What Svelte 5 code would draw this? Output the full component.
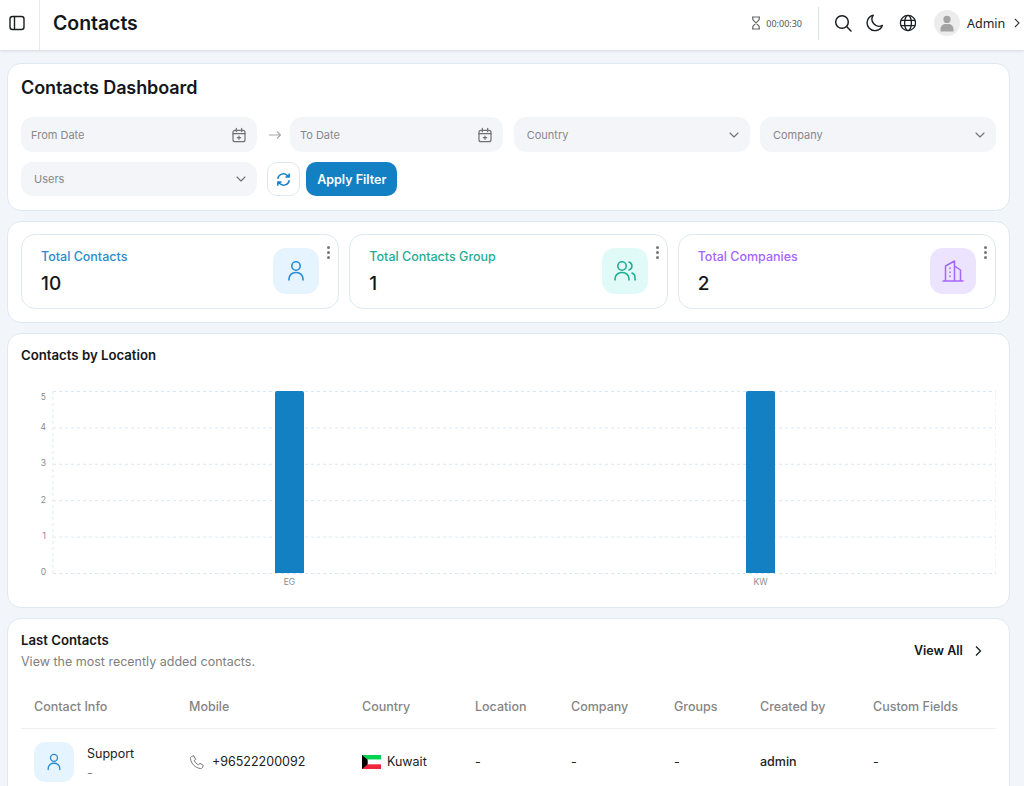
<script>
  const ticks = [5, 4, 3, 2, 1, 0];
  const bars = [
    { label: 'EG', x: 254 },
    { label: 'KW', x: 725 }
  ];
  const stats = [
    { title: 'Total Contacts', value: '10', tone: 'blue', icon: 'user' },
    { title: 'Total Contacts Group', value: '1', tone: 'teal', icon: 'users' },
    { title: 'Total Companies', value: '2', tone: 'purple', icon: 'building' }
  ];
  const columns = ['Contact Info', 'Mobile', 'Country', 'Location', 'Company', 'Groups', 'Created by', 'Custom Fields'];
</script>

{#snippet calendar()}
  <svg class="field-icon" width="16" height="16" viewBox="0 0 24 24" fill="none" stroke="currentColor" stroke-width="1.8" stroke-linecap="round" stroke-linejoin="round">
    <rect x="3" y="5" width="18" height="17" rx="3" />
    <path d="M8 2v5M16 2v5M3 10h18M12 13.5v5M9.5 16h5" />
  </svg>
{/snippet}

{#snippet chevron()}
  <svg class="field-icon" width="12" height="12" viewBox="0 0 24 24" fill="none" stroke="currentColor" stroke-width="2.2" stroke-linecap="round" stroke-linejoin="round">
    <path d="M4 8l8 8 8-8" />
  </svg>
{/snippet}

{#snippet userIcon(size)}
  <svg width={size} height={size} viewBox="0 0 24 24" fill="none" stroke="currentColor" stroke-width="1.6" stroke-linecap="round">
    <circle cx="12" cy="7" r="4.2" />
    <path d="M5 21v-1a6.500 6.500 0 0 1 6.500-6.500h1a6.500 6.500 0 0 1 6.500 6.500v1" />
  </svg>
{/snippet}

<div class="page">
  <header class="topbar">
    <div class="toggle">
      <svg width="18" height="18" viewBox="0 0 18 18" fill="none" stroke="#1a1d21" stroke-width="1.4">
        <rect x="2" y="2.500" width="14" height="13" rx="2.500" />
        <path d="M6.500 2.500v13" />
      </svg>
    </div>
    <h1>Contacts</h1>
    <div class="timer">
      <svg width="12" height="14" viewBox="0 0 12 14" fill="none" stroke="#666" stroke-width="1.2" stroke-linejoin="round">
        <path d="M2 1h8M2 13h8M2.800 1v2.600L9.200 10.400V13M9.200 1v2.600L2.800 10.400V13" />
      </svg>
      <span>00:00:30</span>
    </div>
    <div class="tools">
      <svg width="18" height="18" viewBox="0 0 18 18" fill="none" stroke="#1a1d21" stroke-width="1.500" stroke-linecap="round">
        <circle cx="8" cy="8" r="6.300" />
        <path d="M12.800 12.800L17 17" />
      </svg>
      <svg width="18" height="18" viewBox="0 0 18 18" fill="none" stroke="#1a1d21" stroke-width="1.400" stroke-linejoin="round">
        <path d="M7.300 1.200a7.800 7.800 0 1 0 9 10.200 7 7 0 0 1-9-10.200z" />
      </svg>
      <svg width="18" height="18" viewBox="0 0 18 18" fill="none" stroke="#1a1d21" stroke-width="1.300">
        <circle cx="10" cy="9" r="7.600" />
        <ellipse cx="10" cy="9" rx="3.400" ry="7.600" />
        <path d="M3 6.400h14M3 11.600h14" />
      </svg>
    </div>
    <div class="account">
      <div class="avatar">
        <svg width="16" height="17" viewBox="0 0 16 17" fill="#a3a3a3">
          <circle cx="8" cy="4.400" r="3.600" />
          <path d="M1.500 16.500v-2.500a5 5 0 0 1 5-5h3a5 5 0 0 1 5 5v2.500z" />
        </svg>
      </div>
      <span>Admin</span>
      <svg width="8" height="10" viewBox="0 0 8 10" fill="none" stroke="#333" stroke-width="1.100"><path d="M2 1l4 4-4 4" /></svg>
    </div>
  </header>

  <main>
    <section class="card filters">
      <h2>Contacts Dashboard</h2>
      <div class="filter-grid">
        <div class="date-range">
          <div class="field from">From Date {@render calendar()}</div>
          <svg class="arrow" width="14" height="10" viewBox="0 0 14 10" fill="none" stroke="#a8a8a8" stroke-width="1.100"><path d="M1 5h11.500M9 1.500L12.500 5 9 8.500" /></svg>
          <div class="field to">To Date {@render calendar()}</div>
        </div>
        <div class="field select">Country {@render chevron()}</div>
        <div class="field select">Company {@render chevron()}</div>
        <div class="field select users">Users {@render chevron()}</div>
        <div class="actions">
          <button class="refresh" aria-label="Refresh">
            <svg width="15" height="15" viewBox="0 0 24 24" fill="none" stroke="#1380c4" stroke-width="2.400" stroke-linecap="round" stroke-linejoin="round">
              <path d="M3 10a9 9 0 0 1 15-4.500L21 8M21 3v5h-5M21 14a9 9 0 0 1-15 4.500L3 16M3 21v-5h5" />
            </svg>
          </button>
          <button class="apply">Apply Filter</button>
        </div>
      </div>
    </section>

    <section class="card stats">
      {#each stats as stat}
        <div class="stat {stat.tone}">
          <div class="stat-text">
            <div class="stat-title">{stat.title}</div>
            <div class="stat-value">{stat.value}</div>
          </div>
          <div class="stat-icon">
            {#if stat.icon === 'user'}
              {@render userIcon(24)}
            {:else if stat.icon === 'users'}
              <svg width="24" height="24" viewBox="0 0 24 24" fill="none" stroke="currentColor" stroke-width="1.600" stroke-linecap="round">
                <circle cx="9" cy="7" r="4.200" />
                <path d="M2 21v-1a6.500 6.500 0 0 1 6.500-6.500h1a6.500 6.500 0 0 1 6.500 6.500v1M16 3a4.200 4.200 0 0 1 0 8M19 14a5 5 0 0 1 3 5v2" />
              </svg>
            {:else}
              <svg width="24" height="24" viewBox="0 0 24 24" fill="none" stroke="currentColor" stroke-width="1.500" stroke-linecap="round" stroke-linejoin="round">
                <path d="M2 22h20M4.500 22V7l9-5v20M13.500 7l6 4v11M9 9v.5M9 13v.5M9 17v.5" />
              </svg>
            {/if}
          </div>
          <div class="dots"><i></i><i></i><i></i></div>
        </div>
      {/each}
    </section>

    <section class="card chart-card">
      <h3>Contacts by Location</h3>
      <svg class="chart" width="975" height="218" viewBox="0 0 975 218">
        {#each ticks as tick, i}
          <line class="grid" x1="32" x2="975" y1={13.5 + i * 36.4} y2={13.5 + i * 36.4} />
          <text class="axis" x="25" y={i === 0 ? 22 : 15.3 + i * 36.4} text-anchor="end">{tick}</text>
        {/each}
        <line class="grid" x1="32" x2="32" y1="13" y2="195" />
        <line class="grid" x1="975" x2="975" y1="13" y2="195" />
        {#each bars as bar}
          <path d={`M${bar.x} 195V15a2 2 0 0 1 2-2h25a2 2 0 0 1 2 2v180z`} fill="#1380c4" />
          <text class="axis" x={bar.x + 14.5} y="207" text-anchor="middle">{bar.label}</text>
        {/each}
      </svg>
    </section>

    <section class="card last">
      <div class="last-head">
        <div>
          <h3>Last Contacts</h3>
          <p>View the most recently added contacts.</p>
        </div>
        <div class="view-all">
          View All
          <svg width="10" height="12" viewBox="0 0 10 12" fill="none" stroke="#1a1d21" stroke-width="1.300"><path d="M3 1.500L7.500 6 3 10.500" /></svg>
        </div>
      </div>
      <table>
        <colgroup>
          <col style="width:155px" /><col style="width:173px" /><col style="width:113px" /><col style="width:96px" />
          <col style="width:103px" /><col style="width:86px" /><col style="width:113px" /><col style="width:136px" />
        </colgroup>
        <thead>
          <tr>
            {#each columns as column}
              <th>{column}</th>
            {/each}
          </tr>
        </thead>
        <tbody>
          <tr>
            <td>
              <div class="contact">
                <div class="contact-icon">{@render userIcon(20)}</div>
                <div class="contact-text">
                  <div class="contact-name">Support</div>
                  <div class="contact-sub">-</div>
                </div>
              </div>
            </td>
            <td>
              <div class="inline">
                <svg width="16" height="16" viewBox="0 0 24 24" fill="none" stroke="#777" stroke-width="1.500" stroke-linejoin="round">
                  <path d="M7 2.500L3.500 4C2.500 4.500 2 5.500 2.200 7c1 7.500 7.300 13.800 14.800 14.800 1.500.2 2.500-.3 3-1.300l1.500-3.500-5-3-2.300 2.200c-2.800-1.200-5.200-3.700-6.400-6.400L10 8z" />
                </svg>
                +96522200092
              </div>
            </td>
            <td>
              <div class="inline flag-cell">
                <svg width="19" height="14" viewBox="0 0 20 15" preserveAspectRatio="none">
                  <rect width="20" height="5" fill="#00d34f" />
                  <rect y="5" width="20" height="5" fill="#fff" />
                  <rect y="10" width="20" height="5" fill="#f0263c" />
                  <path d="M0 0l6 5v5l-6 5z" fill="#000" />
                </svg>
                Kuwait
              </div>
            </td>
            <td>-</td>
            <td>-</td>
            <td>-</td>
            <td class="strong">admin</td>
            <td>-</td>
          </tr>
        </tbody>
      </table>
    </section>
  </main>
</div>

<style>
  :global(body) {
    margin: 0;
    background: #f2f5f9;
  }

  .page {
    height: 786px;
    overflow: hidden;
    font-family: Inter, 'Noto Sans', sans-serif;
    color: #14171a;
  }

  .topbar {
    height: 50px;
    box-sizing: border-box;
    padding-bottom: 4px;
    display: flex;
    align-items: center;
    background: #fff;
    box-shadow: 0 1px 3px rgba(0, 0, 0, 0.12);
    position: relative;
  }

  .toggle {
    width: 40px;
    height: 50px;
    align-self: flex-start;
    box-sizing: border-box;
    display: flex;
    align-items: center;
    padding: 0 0 4px 8px;
    border-right: 1px solid #e4edf4;
  }

  h1 {
    margin: 0 0 0 13px;
    font-size: 19.5px;
    font-weight: 600;
    letter-spacing: -0.05px;
    flex: 1;
  }

  .timer {
    display: flex;
    align-items: center;
    gap: 4px;
    font-size: 9px;
    color: #555;
    font-family: 'Noto Sans', sans-serif;
    padding-right: 16px;
    height: 33px;
    border-right: 1px solid #d5e4ee;
  }

  .tools {
    display: flex;
    align-items: center;
    gap: 14px;
    margin-left: 15px;
  }

  .account {
    display: flex;
    align-items: center;
    margin-left: 18px;
    width: 90px;
    font-family: 'Noto Sans', sans-serif;
    font-size: 12.5px;
    color: #222;
  }

  .account span {
    margin: 0 8px 0 7px;
  }

  .avatar {
    width: 26px;
    height: 26px;
    border-radius: 50%;
    background: #ececec;
    display: flex;
    align-items: flex-end;
    justify-content: center;
    box-sizing: border-box;
    padding-bottom: 4px;
  }

  main {
    padding: 13px 14px 0 7px;
    display: flex;
    flex-direction: column;
    gap: 10px;
  }

  .card {
    background: #fff;
    border: 1px solid #dfe9f1;
    border-radius: 14px;
    box-sizing: border-box;
  }

  .filters {
    height: 148px;
    padding: 12px 13px;
  }

  h2 {
    margin: 0;
    font-size: 18px;
    line-height: 24px;
    font-weight: 600;
    letter-spacing: -0.1px;
  }

  .filter-grid {
    margin-top: 17px;
    display: grid;
    grid-template-columns: repeat(4, 236px);
    gap: 10px;
    justify-content: space-between;
    color: #888;
    font-size: 11px;
  }

  .date-range {
    grid-column: span 2;
    display: flex;
    align-items: center;
  }

  .arrow {
    margin: 0 8px 0 11px;
    flex: none;
  }

  .field {
    height: 35px;
    flex: none;
    box-sizing: border-box;
    background: #f3f5f9;
    border-radius: 12px;
    padding: 0 10px;
    display: flex;
    align-items: center;
    justify-content: space-between;
  }

  .from {
    width: 236px;
  }

  .to {
    flex: 1;
  }

  .select {
    padding: 0 10px 0 13px;
  }

  .users {
    height: 34px;
  }

  .field-icon {
    color: #707070;
  }

  .actions {
    display: flex;
    gap: 6px;
  }

  button {
    font-family: inherit;
    cursor: pointer;
  }

  .refresh {
    width: 33px;
    height: 34px;
    padding: 0;
    display: flex;
    align-items: center;
    justify-content: center;
    background: #fff;
    border: 1px solid #dfe9f1;
    border-radius: 10px;
  }

  .apply {
    width: 91px;
    height: 34px;
    padding: 0;
    background: #1380c4;
    border: none;
    border-radius: 10px;
    color: #fff;
    font-size: 12.5px;
    font-weight: 600;
  }

  .stats {
    height: 102px;
    padding: 12px 13px;
    display: grid;
    grid-template-columns: repeat(3, 1fr);
    gap: 10px;
  }

  .stat {
    position: relative;
    height: 75px;
    box-sizing: border-box;
    border: 1px solid #dfe9f1;
    border-radius: 14px;
    padding: 13px 19px;
    display: flex;
    justify-content: space-between;
  }

  .stat-title {
    font-size: 12.5px;
    line-height: 17px;
    font-weight: 500;
  }

  .stat-value {
    margin-top: 7px;
    font-size: 19px;
    line-height: 24px;
    font-weight: 500;
    color: #14171a;
  }

  .stat-icon {
    width: 46px;
    height: 46px;
    border-radius: 13px;
    display: flex;
    align-items: center;
    justify-content: center;
  }

  .blue .stat-title, .blue .stat-icon { color: #2a8bd0; }
  .blue .stat-icon { background: #e6f4ff; }
  .teal .stat-title, .teal .stat-icon { color: #1fae92; }
  .teal .stat-icon { background: #e0fbf7; }
  .purple .stat-title, .purple .stat-icon { color: #a566ff; }
  .purple .stat-icon { background: #ece4ff; }

  .dots {
    position: absolute;
    top: 11px;
    right: 8px;
    display: flex;
    flex-direction: column;
    gap: 2px;
  }

  .dots i {
    width: 3px;
    height: 3px;
    border-radius: 50%;
    background: #777;
  }

  .chart-card {
    height: 275px;
    padding: 12px 13px 0;
  }

  h3 {
    margin: 0;
    font-size: 13.2px;
    line-height: 18px;
    font-weight: 600;
  }

  .chart {
    display: block;
    margin-top: 14px;
  }

  .grid {
    stroke: #dce8f1;
    stroke-width: 1;
    stroke-dasharray: 3 3;
  }

  .axis {
    font-size: 8.5px;
    fill: #8a8a8a;
  }

  .last {
    height: 220px;
    padding: 12px 13px 0;
  }

  .last-head {
    display: flex;
    justify-content: space-between;
    align-items: center;
  }

  .last-head p {
    margin: 5px 0 0;
    font-size: 12.5px;
    line-height: 16px;
    color: #808080;
  }

  .view-all {
    display: flex;
    align-items: center;
    gap: 10px;
    width: 82px;
    font-size: 12.5px;
    font-weight: 600;
  }

  table {
    margin-top: 14px;
    width: 975px;
    table-layout: fixed;
    border-collapse: collapse;
    font-size: 12.5px;
  }

  th {
    height: 44px;
    padding: 0 0 0 13px;
    text-align: left;
    font-weight: 500;
    color: #858585;
    border-bottom: 1px solid #eef1f4;
  }

  td {
    height: 66px;
    padding: 0 0 0 13px;
    box-sizing: border-box;
    color: #222;
  }

  .strong {
    font-weight: 500;
  }

  .contact {
    display: flex;
    align-items: center;
    gap: 13px;
  }

  .contact-icon {
    width: 40px;
    height: 40px;
    border-radius: 11px;
    background: #e6f4ff;
    color: #2a8bd0;
    display: flex;
    align-items: center;
    justify-content: center;
  }

  .contact-text {
    margin-top: 2px;
  }

  .contact-name {
    line-height: 17px;
  }

  .contact-sub {
    margin-top: 3px;
    line-height: 16px;
    color: #808080;
  }

  .inline {
    display: flex;
    align-items: center;
    gap: 7px;
  }

  .flag-cell {
    gap: 6px;
  }
</style>
